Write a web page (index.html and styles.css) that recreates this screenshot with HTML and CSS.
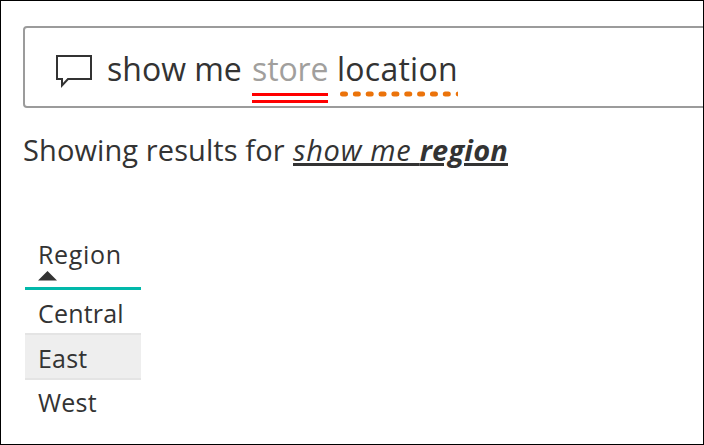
FILE: index.html
```html
<!DOCTYPE html>
<html lang="en">
<head>
<meta charset="utf-8">
<title>Q&amp;A</title>
<link rel="stylesheet" href="styles.css">
</head>
<body>
<main class="page">
  <div class="ask">
    <svg class="bubble" width="36" height="34" viewBox="0 0 36 34"><path d="M1 1H35V24H12L6 30.5V24H1Z" fill="none" stroke="#333" stroke-width="2"/></svg>
    <span class="w show">show me</span>
    <span class="w store">store<i class="double"></i></span>
    <span class="w location">location<svg class="dots" width="118" height="6"><path d="M2.5 3H130" stroke="#eb730a" stroke-width="5" stroke-linecap="round" stroke-dasharray="3 9.85"/></svg></span>
  </div>
  <p class="results"><span class="lead">Showing results for</span><a class="link"><span class="l1">show me </span><b class="l2">region</b></a></p>
  <div class="table">
    <div class="head"><span class="t region">Region</span><svg class="sort" width="19" height="10"><path d="M0 9.5L9.5 0L19 9.5Z" fill="#333"/></svg></div>
    <div class="row r1"><span class="t">Central</span></div>
    <div class="row r2"><span class="t">East</span></div>
    <div class="row r3"><span class="t">West</span></div>
  </div>
</main>
</body>
</html>
```
FILE: styles.css
```css
* { box-sizing: border-box; }
body { margin: 0; font-family: "Open Sans", "Noto Sans", sans-serif; color: #333; background: #fff; }
.page { width: 704px; height: 445px; border: 1px solid #000; padding: 25px 0 0 22px; overflow: hidden; }
.ask { height: 82px; width: 700px; border: 2px solid #9b9b9b; border-radius: 4px; display: flex; align-items: flex-start; padding: 19px 0 0 31px; font-size: 32px; }
.bubble { margin: 8px 15px 0 0; flex: none; }
.w { position: relative; line-height: 44px; white-space: nowrap; }
.show { width: 145px; }
.store { width: 85px; color: #a19f9d; letter-spacing: -.1px; }
.location { letter-spacing: .25px; }
.double { position: absolute; left: 0; top: 46px; width: 76px; height: 10px; border: solid #f00; border-width: 3px 0; }
.dots { position: absolute; left: 3px; top: 44px; }
.results { margin: 21px 0 0; display: flex; font-size: 29px; line-height: 42px; white-space: nowrap; }
.lead { width: 270px; letter-spacing: .1px; }
.link { font-style: italic; text-decoration: underline; text-decoration-thickness: 3px; text-underline-offset: 2px; letter-spacing: .5px; }
.l1 { letter-spacing: .7px; }
.l2 { letter-spacing: .2px; }
.table { margin: 62px 0 0 2px; width: 116px; font-size: 25px; }
.head { height: 57px; border-bottom: 3px solid #01b8aa; padding-left: 13px; display: flex; flex-direction: column; }
.region { line-height: 40px; margin-top: 1px; letter-spacing: .65px; }
.sort { margin-top: -3px; }
.row { height: 43px; padding-left: 13px; line-height: 47px; letter-spacing: .2px; }
.r2 { height: 47px; background: #eee; border: solid #e4e4e4; border-width: 2px 0; }
.r3 { line-height: 44px; }
```
